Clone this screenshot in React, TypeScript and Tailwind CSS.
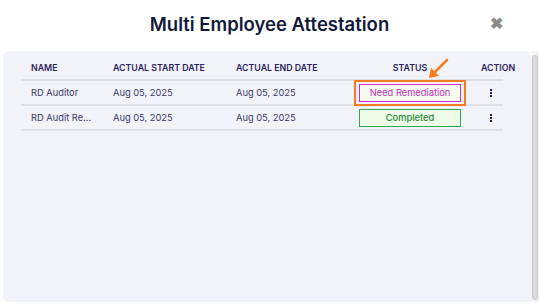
import React from "react";

const rows = [
  { name: "RD Auditor", start: "Aug 05, 2025", end: "Aug 05, 2025", status: "remediation" },
  { name: "RD Audit Re...", start: "Aug 05, 2025", end: "Aug 05, 2025", status: "completed" },
];

const Kebab = () => (
  <div className="flex flex-col items-center gap-[1px]">
    <span className="block w-[2px] h-[2px] bg-[#1d1a4a]" />
    <span className="block w-[2px] h-[2px] bg-[#1d1a4a]" />
    <span className="block w-[2px] h-[2px] bg-[#1d1a4a]" />
  </div>
);

export default function App() {
  return (
    <div
      className="w-[539px] h-[304px] bg-white overflow-hidden relative"
      style={{ fontFamily: "Inter, 'Noto Sans', sans-serif" }}
    >
      {/* Header */}
      <div className="h-[51px] flex items-center justify-center relative">
        <h1 className="text-[18.5px] font-semibold text-[#111a3a] mt-[-2px]">
          Multi Employee Attestation
        </h1>
        <button className="absolute right-[36px] top-[15px] text-[#8a8a8a] text-[16px] font-bold leading-none">
          ✖
        </button>
      </div>

      {/* Body */}
      <div className="flex h-[251px] pl-[3px]">
        <div className="flex-1 bg-[#f2f3f8] rounded-l-[6px] rounded-tr-[6px] pt-[6px]">
          <div className="ml-[18px] w-[482px] text-[9.3px]">
            {/* head */}
            <div className="grid grid-cols-[92px_123px_123px_102px_42px] items-center h-[24px] border-b-2 border-[#dfe0e6] font-semibold text-[8.8px] text-[#2a1f5e] uppercase">
              <div className="pl-[10px]">Name</div>
              <div>Actual Start Date</div>
              <div>Actual End Date</div>
              <div className="text-center">Status</div>
              <div className="pl-[20px] whitespace-nowrap">Action</div>
            </div>
            {rows.map((r) => (
              <div
                key={r.name}
                className="grid grid-cols-[92px_123px_123px_102px_42px] items-center h-[25px] border-b-2 border-[#dfe0e6] text-[#3a3868]"
              >
                <div className="pl-[10px] whitespace-nowrap">{r.name}</div>
                <div>{r.start}</div>
                <div>{r.end}</div>
                <div className="relative">
                  {r.status === "remediation" ? (
                    <>
                      <div className="absolute -inset-x-[5px] -top-[4px] -bottom-[4px] border-2 border-[#f47b20]" />
                      <div className="h-[18px] flex items-center justify-center border border-[#d62ad6] bg-[#f6fbef] text-[#c42cc4] text-[9.3px]">
                        Need Remediation
                      </div>
                    </>
                  ) : (
                    <div className="h-[18px] flex items-center justify-center border border-[#2fa64a] bg-[#eefbe9] text-[#1f8a3b] font-medium text-[9.3px]">
                      Completed
                    </div>
                  )}
                </div>
                <div className="pl-[29px] flex">
                  <Kebab />
                </div>
              </div>
            ))}
          </div>
        </div>
        {/* scrollbar */}
        <div className="w-[8px] bg-[#f4f4f6] flex justify-center pt-[4px] pb-[2px]">
          <div className="w-[6px] h-full rounded-full bg-[#dcdce0] border border-[#c9c9cf]" />
        </div>
      </div>

      {/* arrow */}
      <svg className="absolute left-[426px] top-[57px]" width="24" height="24" viewBox="0 0 24 24">
        <line x1="21" y1="3" x2="7" y2="17" stroke="#f47b20" strokeWidth="2.5" strokeLinecap="round" />
        <polygon points="3,21 5,11 13,19" fill="#f47b20" />
      </svg>
    </div>
  );
}
